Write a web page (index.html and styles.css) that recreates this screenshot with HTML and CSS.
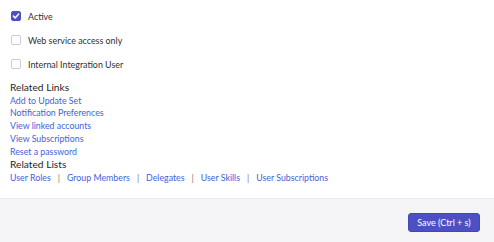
FILE: index.html
```html
<!DOCTYPE html>
<html>
<head>
<meta charset="utf-8">
<link rel="stylesheet" href="styles.css">
</head>
<body>
<div class="page">
  <div class="content">
    <div class="checks">
      <label class="check"><span class="box on"><svg viewBox="0 0 10 10" width="10" height="10"><path d="M2.4 5.1 L4.2 6.9 L7.7 3.1" fill="none" stroke="#fff" stroke-width="1.5" stroke-linecap="round" stroke-linejoin="round"/></svg></span><span>Active</span></label>
      <label class="check"><span class="box"></span><span>Web service access only</span></label>
      <label class="check"><span class="box"></span><span>Internal Integration User</span></label>
    </div>
    <div class="section">
      <div class="heading">Related Links</div>
      <a class="link" href="#">Add to Update Set</a>
      <a class="link" href="#">Notification Preferences</a>
      <a class="link" href="#">View linked accounts</a>
      <a class="link" href="#">View Subscriptions</a>
      <a class="link" href="#">Reset a password</a>
      <div class="heading">Related Lists</div>
      <div class="lists">
        <a class="link" href="#">User Roles</a><span class="sep">|</span>
        <a class="link" href="#">Group Members</a><span class="sep">|</span>
        <a class="link" href="#">Delegates</a><span class="sep">|</span>
        <a class="link" href="#">User Skills</a><span class="sep">|</span>
        <a class="link" href="#">User Subscriptions</a>
      </div>
    </div>
  </div>
  <div class="footer">
    <button class="save">Save (Ctrl + s)</button>
  </div>
</div>
</body>
</html>
```
FILE: styles.css
```css
* { box-sizing: border-box; }
html, body { margin: 0; padding: 0; }
body {
  width: 494px;
  height: 242px;
  background: #fff;
  font-family: Lato, "Open Sans", sans-serif;
  color: #2e2e2e;
  overflow: hidden;
}
.page { display: flex; flex-direction: column; height: 242px; }
.content { padding: 9px 10px 0 10px; height: 199px; border-bottom: 1px solid #ececef; }
.checks { display: flex; flex-direction: column; gap: 10px; padding-left: 1px; }
.check { display: flex; align-items: center; gap: 7px; font-size: 8.9px; height: 14px; color: #2f2f2f; }
.box {
  flex: 0 0 auto;
  width: 10px; height: 10px; border: 1px solid #cacad0; border-radius: 2px; background: #fff;
  display: flex; align-items: center; justify-content: center;
}
.box.on { background: #4c50c2; border-color: #4c50c2; }
.box svg { display: block; flex: 0 0 auto; }
.section { display: flex; flex-direction: column; margin-top: 10px; }
.heading { font-size: 10.2px; line-height: 13px; color: #1f1f1f; }
.link { font-size: 8.8px; line-height: 12.8px; color: #4262d6; text-decoration: none; }
.heading + .link { margin-top: 0.5px; }
.lists { display: flex; align-items: center; margin-top: 0.5px; }
.sep { font-size: 8.8px; color: #777; margin: 0 7px; line-height: 12.8px; }
.footer { flex: 1; background: #f5f5f7; display: flex; justify-content: flex-end; align-items: flex-start; padding: 14px 14px 0 0; }
.save {
  font-family: Lato, sans-serif; font-size: 9px; color: #fff; background: #4c50c2;
  border: 1px solid #4246b6; border-radius: 3px; height: 19px; padding: 0; width: 72px;
  white-space: nowrap; display: flex; align-items: center; justify-content: center;
}
```
